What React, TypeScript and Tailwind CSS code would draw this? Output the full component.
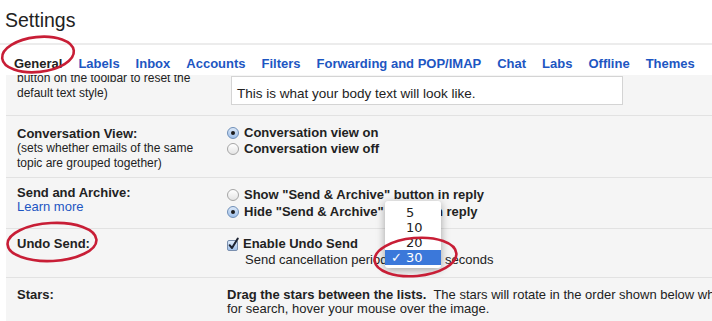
import { ReactNode } from "react";

const tabs = ["Labels", "Inbox", "Accounts", "Filters", "Forwarding and POP/IMAP", "Chat", "Labs", "Offline", "Themes"];

const Radio = ({ on }: { on?: boolean }) => (
  <span
    className={
      "inline-flex items-center justify-center w-[12px] h-[12px] rounded-full border shrink-0 " +
      (on
        ? "border-[#6f8fb8] bg-gradient-to-b from-[#dbe8f8] to-[#9fc0ea]"
        : "border-[#a5a5a5] bg-gradient-to-b from-white to-[#e4e4e4]")
    }
  >
    {on && <span className="w-[4px] h-[4px] rounded-full bg-[#1b1b1b]" />}
  </span>
);

const Check = () => (
  <svg width="14" height="14" viewBox="0 0 14 14" className="shrink-0">
    <defs>
      <linearGradient id="cb" x1="0" y1="0" x2="0" y2="1">
        <stop offset="0" stopColor="#e3eefb" />
        <stop offset="1" stopColor="#9cbde8" />
      </linearGradient>
    </defs>
    <rect x="1.5" y="3.5" width="10" height="10" rx="1.5" fill="url(#cb)" stroke="#7a8fae" />
    <path d="M3.6 8.2 L6 11 L11.8 1.5" fill="none" stroke="#1c2230" strokeWidth="2" strokeLinecap="round" strokeLinejoin="round" />
  </svg>
);

const Row = ({ h, label, children }: { h: string; label: ReactNode; children: ReactNode }) => (
  <>
    <div className={"flex " + h}>
      <div className="w-[222px] pl-[11px] shrink-0">{label}</div>
      <div className="flex-1 whitespace-nowrap">{children}</div>
    </div>
    <div className="h-px bg-[#e2e2e2]" />
  </>
);

export default function App() {
  return (
    <div className="relative w-[712px] h-[321px] overflow-hidden bg-white text-[#222] font-['Liberation_Sans',Arial,sans-serif]">
      <div className="h-[43px] pl-[5px] pt-[8px] text-[19.5px] leading-[24px]">Settings</div>
      <div className="h-[2px] bg-[#ececec]" />
      <div className="relative z-10 h-[30px] bg-white flex gap-[16px] pl-[14px] pt-[11px] text-[13px] leading-[15px] font-bold">
        <span className="text-[#222]">General</span>
        {tabs.map((t) => (
          <span key={t} className="text-[#1d56c2]">{t}</span>
        ))}
      </div>

      <div className="ml-[6px] h-[246px] bg-[#f5f5f5] overflow-hidden">
        {/* row partly scrolled under the tabs */}
        <div className="flex h-[40px]">
          <div className="w-[222px] pl-[11px] -mt-[4px] text-[12px] leading-[15px] shrink-0">
            <div>button on the toolbar to reset the</div>
            <div>default text style)</div>
          </div>
          <div className="ml-[3px] mt-[1px] w-[392px] h-[29px] bg-white border border-[#d4d4d4] flex items-end pb-[3px] pl-[5px] text-[13.5px] leading-[15px]">
            This is what your body text will look like.
          </div>
        </div>
        <div className="h-px bg-[#e2e2e2]" />

        <Row
          h="h-[61px]"
          label={
            <div className="pt-[10px] leading-[15px]">
              <div className="text-[13px] font-bold">Conversation View:</div>
              <div className="text-[12px]">(sets whether emails of the same</div>
              <div className="text-[12px]">topic are grouped together)</div>
            </div>
          }
        >
          <div className="pt-[9px] text-[13px] font-bold leading-[16px]">
            <div className="flex items-center gap-[5px] -ml-[1px]"><Radio on />Conversation view on</div>
            <div className="flex items-center gap-[5px] -ml-[1px]"><Radio />Conversation view off</div>
          </div>
        </Row>

        <Row
          h="h-[50px]"
          label={
            <div className="pt-[8px] text-[13px] leading-[14px]">
              <div className="font-bold">Send and Archive:</div>
              <div className="text-[#1d56c2]">Learn more</div>
            </div>
          }
        >
          <div className="pt-[8px] text-[13px] font-bold leading-[17px]">
            <div className="flex items-center gap-[5px] -ml-[1px]"><Radio />Show "Send &amp; Archive" button in reply</div>
            <div className="flex items-center gap-[5px] -ml-[1px]"><Radio on />Hide "Send &amp; Archive" button in reply</div>
          </div>
        </Row>

        <Row
          h="h-[48px]"
          label={<div className="pt-[7px] text-[13px] leading-[16px] font-bold">Undo Send:</div>}
        >
          <div className="pt-[7px] text-[13px] leading-[16px]">
            <div className="flex items-center gap-[3px] -ml-[2px] font-bold"><Check />Enable Undo Send</div>
            <div className="pl-[17px]">
              Send cancellation period:
              <span className="inline-block w-[48px] mx-[3px]" />
              seconds
            </div>
          </div>
        </Row>

        <div className="flex">
          <div className="w-[222px] pl-[11px] pt-[10px] text-[13px] leading-[14px] font-bold shrink-0">Stars:</div>
          <div className="pt-[10px] text-[13px] leading-[14px] whitespace-nowrap -ml-[1px]">
            <div>
              <b>Drag the stars between the lists.</b>&nbsp; The stars will rotate in the order shown below when you click successively. To learn the name of a star
            </div>
            <div>for search, hover your mouse over the image.</div>
          </div>
        </div>
      </div>

      {/* open select menu */}
      <div className="absolute left-[385px] top-[201px] z-20 w-[56px] h-[67px] bg-white rounded-[3px] shadow-[0_2px_8px_rgba(0,0,0,0.35)] pt-[4px] text-[13px] font-['DejaVu_Sans',sans-serif]">
        {["5", "10", "20"].map((n) => (
          <div key={n} className="h-[15px] leading-[15px] pl-[21px]">{n}</div>
        ))}
        <div className="h-[15px] leading-[15px] flex bg-[#3b78da] text-white">
          <span className="w-[21px] pl-[6px]">✓</span>30
        </div>
      </div>

      {/* annotation circles */}
      <svg className="absolute inset-0 z-30 pointer-events-none" width="712" height="321">
        <ellipse cx="38" cy="54.5" rx="36" ry="17.5" transform="rotate(-6 38 54.5)" fill="none" stroke="#c81e36" strokeWidth="2.6" />
        <ellipse cx="52" cy="242" rx="44.5" ry="19" transform="rotate(-3 52 242)" fill="none" stroke="#c81e36" strokeWidth="2.6" />
        <ellipse cx="415.5" cy="257" rx="41" ry="19" transform="rotate(-5 415.5 257)" fill="none" stroke="#c81e36" strokeWidth="2.6" />
      </svg>
    </div>
  );
}
